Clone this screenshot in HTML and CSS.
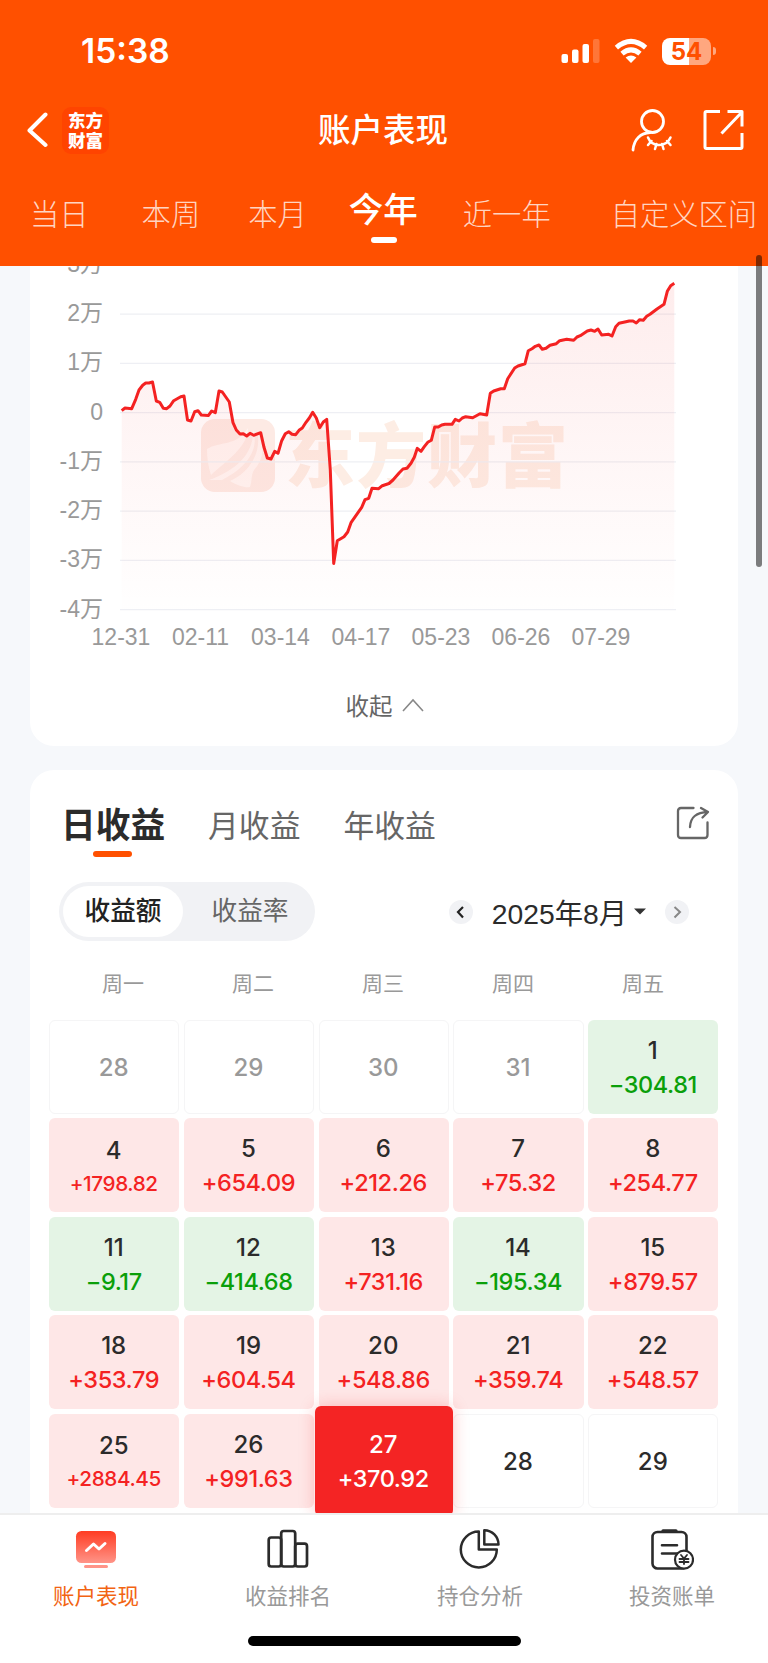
FILE: index.html
```html
<!DOCTYPE html>
<html lang="zh-CN">
  <head>
    <meta charset="utf-8">
    <title>账户表现</title>
    <link rel="stylesheet" href="styles.css">
  </head>
  <body>
    <header class="header">
      <div class="status">
        <span class="time">15:38</span>
        <svg class="signal" width="40" height="26" viewBox="0 0 40 26" fill="#fff">
          <rect x="0.5" y="16" width="6.5" height="9" rx="2"/>
          <rect x="11" y="11.5" width="6.5" height="13.5" rx="2"/>
          <rect x="21.5" y="6" width="6.5" height="19" rx="2"/>
          <rect x="32" y="1" width="6.5" height="24" rx="2" opacity="0.22"/>
        </svg>
        <svg class="wifi" width="34" height="26" viewBox="0 0 34 26" fill="none" stroke="#fff" stroke-width="5">
          <path d="M2.4 9.6 Q17 -2.8 31.6 9.6"/>
          <path d="M8 15.6 Q17 8 26 15.6"/>
          <path d="M11.6 19.6 Q17 15.2 22.4 19.6 L17 25 Z" fill="#fff" stroke="none"/>
        </svg>
        <div class="battery"><span>54</span></div>
        <i class="battery-tip"></i>
      </div>
      <div class="titlebar">
        <svg class="back" width="22" height="36" viewBox="0 0 22 36" fill="none" stroke="#fff" stroke-width="4" stroke-linecap="round" stroke-linejoin="round">
          <path d="M18.5 2.5 L2.5 18.5 L18.5 33"/>
        </svg>
        <div class="logo">东方<br>财富</div>
        <h1>账户表现</h1>
        <svg class="user" width="44" height="44" viewBox="0 0 44 44" fill="none" stroke="#fff" stroke-width="2.8" stroke-linecap="round">
          <circle cx="22.5" cy="13.5" r="11"/>
          <path d="M3 42 C4 31 11 25 20 24.5"/>
          <path d="M18 29.5 C22 39.5 36 39.5 40.5 29.5 M21.5 33 L18 37 M26.5 36 L25 41 M32 36 L33.5 41 M37 33 L40.5 37" stroke-width="2.5"/>
        </svg>
        <svg class="open" width="42" height="42" viewBox="0 0 42 42" fill="none" stroke="#fff" stroke-width="3" stroke-linejoin="round">
          <path d="M17 2.5 H3.5 Q2 2.5 2 4 V38 Q2 39.5 3.5 39.5 H37.5 Q39 39.5 39 38 V24 M24.5 2.5 H39 V17.5 M18.5 24.5 L39 3" />
        </svg>
      </div>
      <nav class="ranges">
        <a>当日</a><a>本周</a><a>本月</a><a class="active">今年</a><a>近一年</a><a>自定义区间</a>
      </nav>
    </header>

    <main class="content">
      <section class="card chart-card">
        <svg class="chart" width="708" height="390" viewBox="30 266 708 390">
          <defs>
            <linearGradient id="fill" gradientUnits="userSpaceOnUse" x1="0" y1="283" x2="0" y2="609">
              <stop offset="0" stop-color="#f42626" stop-opacity="0.085"/>
              <stop offset="1" stop-color="#f42626" stop-opacity="0.003"/>
            </linearGradient>
          </defs>
          <g class="watermark">
            <rect x="201" y="419" width="74" height="73" rx="14"/>
            <path class="mark" d="M207 449 C220 441 236 447 248 428 C248 447 226 461 211 475 C208 466 207 457 207 449 Z M209 480 C236 470 254 454 253 430 C259 447 250 466 222 480 Z M230 481 C250 472 258 456 257 433 C266 446 263 460 254 470 C251 475 252 482 250 487 C246 488 238 486 230 481 Z"/>
            <path class="vein" d="M211 478 C236 466 254 452 251 427 M226 481 C250 472 261 452 256 429"/>
            <text x="285" y="482" textLength="283">东方财富</text>
          </g>
          <g class="grid">
            <path d="M120 314.2 H676 M120 363.4 H676 M120 412.6 H676 M120 461.9 H676 M120 511.2 H676 M120 560.4 H676 M120 609.6 H676"/>
          </g>
          <path id="area" fill="url(#fill)"/>
          <polyline id="line" class="line" points="121.7,410.7 125,408 131.7,408.7 135.7,399.3 139,390 142.7,385.3 145.7,383 149,383 152.5,382 156.3,401 159.7,402.3 163.3,408.3 166.7,408.7 170,406 173.7,400.7 180.7,396.7 184,396 187.5,420 191,421 194.7,411.7 198,410.7 201.3,415 208.3,415.6 211.7,411 215.3,412.7 219,391 222.3,392 229.3,402 233,422.7 236.3,430 240,434 243.3,433.7 246.7,436 250,433.3 253.7,435.3 260.7,432.7 264,447.3 267.3,458 271,459 274.7,451.3 278,453.3 281.7,440.7 285.3,433.7 288.7,431.7 292,434.3 295.7,434.7 299,430.3 302.3,428 306,422.3 309.3,418 312.7,412.3 316.3,418 319.7,427.7 323.3,422 326.7,419.3 330.3,470 333.7,563.5 337.3,540.7 344,536.7 347.7,532 351,522.7 358,512.7 361.7,507.3 365,499.7 368.7,498.3 372,488.3 378.7,488.7 382.3,485.7 389,483.5 393,480 399.3,472.7 403,469 407,468.3 411,463.3 414.3,457.3 417.3,448.3 421,451.3 424.3,446.7 427.7,442.3 431.3,440.3 434.7,427 438.3,427 441.7,425 445,424.3 452,424.3 455.3,419.3 459,421 462.3,418 465.7,416.7 472.7,417.7 480,413.7 486.7,415 490.3,393.3 493.7,391 500.7,388.7 504.3,388.7 507.7,378.7 514.7,368 518,366 525,363.7 528.3,350.7 532,348.7 535.3,346.3 539,345 542.3,349.3 546,348.3 550,345.3 556.3,343.7 559.7,340.7 566.7,339.3 573.7,340.3 577,337 580.3,335.7 587.3,331 591,330 594.7,331.3 598,329 601.7,335 608.7,334.3 612,336 615.7,326.7 619,323.3 629.3,321 633,321 636.3,323 639.7,319.7 643.3,320.3 646.7,316.3 650,314.3 657,309 664,304.3 667.3,291.3 670.7,285.7 674.3,283.3"/>
          <g class="ylabel">
            <text x="103" y="272">3万</text>
            <text x="103" y="321">2万</text>
            <text x="103" y="370.3">1万</text>
            <text x="103" y="419.6">0</text>
            <text x="103" y="468.8">-1万</text>
            <text x="103" y="518">-2万</text>
            <text x="103" y="567.3">-3万</text>
            <text x="103" y="616.6">-4万</text>
          </g>
          <g class="xlabel">
            <text x="121" y="645">12-31</text>
            <text x="200.5" y="645">02-11</text>
            <text x="280.5" y="645">03-14</text>
            <text x="361" y="645">04-17</text>
            <text x="441" y="645">05-23</text>
            <text x="521" y="645">06-26</text>
            <text x="601" y="645">07-29</text>
          </g>
        </svg>
        <div class="collapse">收起
          <svg width="22" height="14" viewBox="0 0 22 14" fill="none" stroke="#888" stroke-width="1.6"><path d="M1 13 L11 2 L21 13"/></svg>
        </div>
      </section>

      <section class="card profit-card">
        <div class="profit-tabs">
          <a class="active">日收益</a><a>月收益</a><a>年收益</a>
          <svg width="34" height="34" viewBox="0 0 34 34" fill="none" stroke="#666" stroke-width="2.3" stroke-linecap="round" stroke-linejoin="round">
            <path d="M17.5 2 H5 Q2 2 2 5 V29 Q2 32 5 32 H28.5 Q31.5 32 31.5 29 V16.5"/>
            <path d="M14 21 C14.5 11 20 6.5 32 6 M25 2 L32 6 L26.5 11.5"/>
          </svg>
        </div>
        <div class="tools">
          <div class="toggle"><span class="on">收益额</span><span>收益率</span></div>
          <div class="month">
            <i class="arrow"><svg width="24" height="24" viewBox="0 0 24 24" fill="none" stroke="#222" stroke-width="2.2"><path d="M14 7 L9 12 L14 17.5"/></svg></i>
            <span>2025年8月</span>
            <svg class="caret" width="12" height="7" viewBox="0 0 12 7"><path d="M0 0.5 H12 L6 6.5 Z" fill="#333"/></svg>
            <i class="arrow"><svg width="24" height="24" viewBox="0 0 24 24" fill="none" stroke="#888" stroke-width="2"><path d="M9.5 7 L15 12 L9.5 17.5"/></svg></i>
          </div>
        </div>
        <div class="week"><span>周一</span><span>周二</span><span>周三</span><span>周四</span><span>周五</span></div>
        <div class="days">
          <div class="day out">28</div>
          <div class="day out">29</div>
          <div class="day out">30</div>
          <div class="day out">31</div>
          <div class="day down">1<b>−304.81</b></div>
          <div class="day up long">4<b>+1798.82</b></div>
          <div class="day up">5<b>+654.09</b></div>
          <div class="day up">6<b>+212.26</b></div>
          <div class="day up">7<b>+75.32</b></div>
          <div class="day up">8<b>+254.77</b></div>
          <div class="day down">11<b>−9.17</b></div>
          <div class="day down">12<b>−414.68</b></div>
          <div class="day up">13<b>+731.16</b></div>
          <div class="day down">14<b>−195.34</b></div>
          <div class="day up">15<b>+879.57</b></div>
          <div class="day up">18<b>+353.79</b></div>
          <div class="day up">19<b>+604.54</b></div>
          <div class="day up">20<b>+548.86</b></div>
          <div class="day up">21<b>+359.74</b></div>
          <div class="day up">22<b>+548.57</b></div>
          <div class="day up long">25<b>+2884.45</b></div>
          <div class="day up">26<b>+991.63</b></div>
          <div class="day selected">27<b>+370.92</b></div>
          <div class="day">28</div>
          <div class="day">29</div>
        </div>
      </section>
    </main>

    <footer class="footer">
      <nav class="tabbar">
        <a class="active">
          <svg width="44" height="44" viewBox="0 0 44 44">
            <defs><linearGradient id="screen" x1="0" y1="0" x2="0" y2="1"><stop offset="0" stop-color="#ff3c22"/><stop offset="1" stop-color="#ff9488"/></linearGradient></defs>
            <rect x="2" y="2" width="40" height="32" rx="5.5" fill="url(#screen)"/>
            <rect x="10" y="36" width="24" height="3" rx="1.5" fill="#ff9488"/>
            <path d="M12.5 21.5 L19.5 15 L25 20 L31 14.5" fill="none" stroke="#fff" stroke-width="3" stroke-linecap="round" stroke-linejoin="round"/>
          </svg>
          账户表现
        </a>
        <a>
          <svg width="44" height="44" viewBox="0 0 44 44" fill="none" stroke="#2b2b2b" stroke-width="2.7">
            <rect x="2.7" y="8.5" width="12.5" height="29" rx="2.5"/>
            <rect x="15.2" y="2" width="14" height="35.5" rx="2.5"/>
            <rect x="29.2" y="14.7" width="11.8" height="22.8" rx="2.5"/>
          </svg>
          收益排名
        </a>
        <a>
          <svg width="44" height="44" viewBox="0 0 44 44" fill="none" stroke="#2b2b2b" stroke-width="2.5" stroke-linejoin="round">
            <path d="M20.800 2.500 A18 18 0 1 0 38.800 20.500 H20.800 Z"/>
            <path d="M26.300 1.300 V15.500 H40.500 A14.200 14.200 0 0 0 26.300 1.300 Z"/>
          </svg>
          持仓分析
        </a>
        <a>
          <svg width="44" height="44" viewBox="0 0 44 44" fill="none" stroke="#2b2b2b" stroke-width="2.6" stroke-linecap="round">
            <rect x="2.5" y="3" width="34" height="36.500" rx="5"/>
            <path d="M13 1.800 H26" stroke-width="3.2"/>
            <path d="M12 16.200 H27 M12 24.500 H27"/>
            <circle cx="34" cy="30.700" r="9" fill="#fff" stroke-width="2.200"/>
            <path d="M31 26 L34 29.500 L37 26 M34 29.500 V35 M29.500 30 H38.500 M29.500 33 H38.500" stroke-width="1.800"/>
          </svg>
          投资账单
        </a>
      </nav>
      <div class="home"></div>
    </footer>
    <div class="scrollbar"></div>

    <script>
      // close the line down to the axis for the shaded area
      var line = document.getElementById('line');
      var area = document.getElementById('area');
      area.setAttribute('d', 'M121.7 609.6 L' + line.getAttribute('points') + ' L674.3 609.6 Z');
    </script>
  </body>
</html>
```

FILE: styles.css
```css
* { box-sizing: border-box; }
body { margin: 0; height: 1663px; display: flex; flex-direction: column; overflow: hidden; background: #f6f8fb; color: #2b2b2b; font-family: "Liberation Sans", "Noto Sans CJK SC", sans-serif; }
svg { display: block; flex: none; }
h1 { margin: 0; }

.header { flex: none; height: 266px; background: #ff5000; color: #fff; }
.status { display: flex; align-items: center; height: 102px; padding-left: 81px; }
.time { width: 480px; font: 600 33.5px/40px Inter, sans-serif; }
.wifi { margin-left: 13px; }
.battery { width: 49px; height: 27px; margin-left: 14px; border-radius: 8px; background: linear-gradient(90deg, #fff 55%, #ffa77f 55%); color: #ff5000; font: 700 24px/27px Inter, sans-serif; text-align: center; }
.battery-tip { width: 3px; height: 8px; margin-left: 2px; border-radius: 0 4px 4px 0; background: #ffa77f; }

.titlebar { display: flex; align-items: center; height: 56px; padding-left: 27px; }
.logo { width: 47px; height: 47px; margin-left: 13px; padding-top: 3px; border-radius: 9px; background: #ff4400; font: 900 17.5px/20px "Noto Sans CJK SC", sans-serif; text-align: center; }
.titlebar h1 { width: 130px; margin: 2px 0 0 209px; font-size: 32.5px; font-weight: 500; line-height: 48px; white-space: nowrap; }
.user { margin-left: 182px; }
.open { margin-left: 29px; }

.ranges { display: flex; align-items: center; height: 108px; padding: 5px 0 0 30px; font-size: 29.3px; font-weight: 300; line-height: 44px; white-space: nowrap; }
.ranges a { color: #ffd5c2; margin-right: 48px; }
.ranges a:first-child { margin-right: 53px; }
.ranges a:nth-child(3) { margin-right: 42px; }
.ranges .active { position: relative; margin: -10px 45px 0 0; color: #fff; font-size: 34.5px; font-weight: 500; }
.ranges .active::after { content: ""; position: absolute; left: 22px; bottom: -11px; width: 26px; height: 6px; border-radius: 3px; background: #fff; }
.ranges a:nth-child(5) { margin-right: 60px; }

.content { flex: 1; overflow: hidden; padding: 0 30px; }
.card { background: #fff; border-radius: 24px; }
.chart-card { height: 480px; margin-bottom: 24px; border-radius: 0 0 24px 24px; }
.grid { stroke: #eeeff4; stroke-width: 1.3; }
.line { fill: none; stroke: #f42222; stroke-width: 3; stroke-linejoin: round; }
.watermark { fill: #fdeae4; }
.watermark .mark { fill: #fff5f2; }
.watermark .vein { fill: none; stroke: #fdeae4; stroke-width: 2; }
.watermark text { fill: #fdede4; font: 900 70px "Noto Sans CJK SC", sans-serif; }
.ylabel, .xlabel { fill: #999; font-size: 23px; }
.ylabel { text-anchor: end; }
.xlabel { text-anchor: middle; }
.collapse { display: flex; align-items: center; justify-content: center; gap: 9px; height: 98px; padding-left: 1px; color: #666; font-size: 23.5px; }

.profit-card { height: 900px; }
.profit-tabs { display: flex; align-items: center; height: 108px; padding: 0 28px 2px 31px; font-size: 30.8px; color: #666; }
.profit-tabs a { margin-right: 43px; }
.profit-tabs .active { position: relative; color: #2b2b2b; font-size: 34.7px; font-weight: 700; }
.profit-tabs .active::after { content: ""; position: absolute; left: 32px; bottom: -9px; width: 39px; height: 6px; border-radius: 3px; background: #ff5000; }
.profit-tabs svg { margin-left: auto; }
.tools { display: flex; align-items: center; justify-content: space-between; height: 67px; padding: 0 49px 0 29px; }
.toggle { display: flex; width: 256px; height: 59px; padding: 4px; border-radius: 30px; background: #f1f2f5; color: #666; font-size: 25.7px; line-height: 51px; text-align: center; }
.toggle span { flex: 1; padding-left: 6px; }
.toggle .on { flex: none; width: 120px; padding: 0; border-radius: 26px; background: #fff; color: #222; font-weight: 500; }
.month { display: flex; align-items: center; font-size: 28.3px; }
.month span { margin: -1px 0 0 19px; }
.arrow { width: 24px; height: 24px; border-radius: 50%; background: #f1f2f5; }
.caret { margin: 0 19px 0 7px; }

.week { display: grid; grid-template-columns: repeat(5, 130px); height: 75px; padding-left: 28px; line-height: 77px; font-size: 21px; color: #999; text-align: center; }
.days { display: grid; grid-template-columns: repeat(5, 1fr); grid-auto-rows: 94px; gap: 4.4px; padding: 0 19.5px 0 19px; font: 500 24px/34px Inter, sans-serif; }
.day { display: flex; flex-direction: column; align-items: center; justify-content: center; padding: 2px 1px 0 0; border: 1px solid #f5f5f6; border-radius: 6px; }
.day b { font-weight: 500; font-size: 23.5px; letter-spacing: -0.4px; }
.out { color: #999; }
.up { border: none; background: #fee7e7; }
.up b { color: #f42222; }
.down { border: none; background: #e4f4e5; }
.down b { color: #0a9f0a; }
.long b { font-size: 20.7px; line-height: 31px; }
.selected { z-index: 1; margin: -8px -4px; border: none; background: #f42424; color: #fff; box-shadow: 0 0 16px rgba(244, 34, 34, 0.25); }

.footer { z-index: 2; flex: none; height: 150px; border-top: 2px solid #eee; background: #fff; }
.tabbar { display: flex; height: 121px; padding-top: 14px; }
.tabbar a { flex: 1; display: flex; flex-direction: column; align-items: center; gap: 7px; color: #999; font-size: 21.5px; line-height: 34px; }
.tabbar .active { color: #f26413; }
.home { width: 273px; height: 10px; margin: 0 auto; border-radius: 5px; background: #000; }

.scrollbar { position: absolute; z-index: 3; top: 255px; right: 6px; width: 6px; height: 312px; border-radius: 3px; background: rgba(0, 0, 0, 0.5); }
```
